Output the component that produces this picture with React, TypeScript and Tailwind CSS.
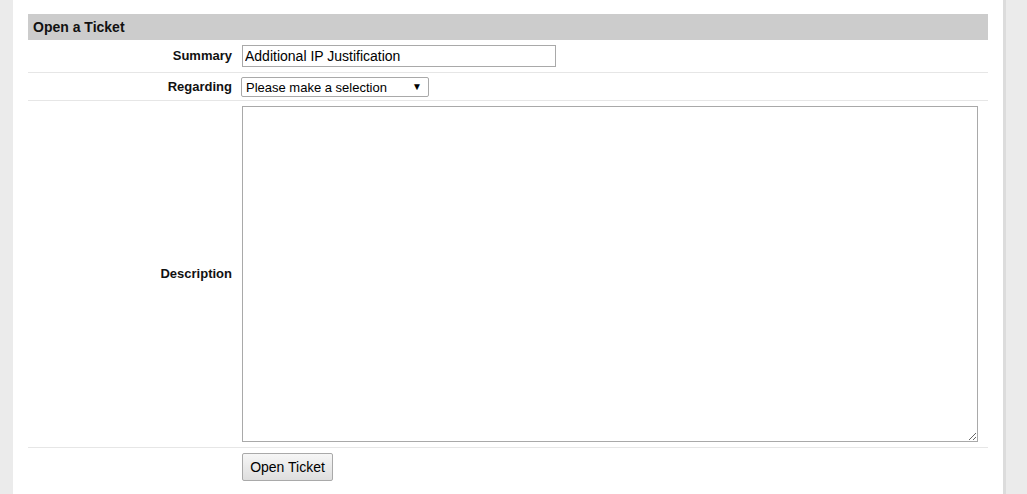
import React from "react";

export default function App() {
  const font = { fontFamily: '"Liberation Sans", Arial, sans-serif' };
  return (
    <div className="flex min-h-[494px] w-full bg-[#ebebeb]" style={font}>
      <div className="w-[13px] shrink-0 bg-[#ebebeb]" />
      <div className="flex-1 bg-white px-[15px] pt-[14px]">
        <div className="flex h-[26px] items-center bg-[#cccccc] px-[5px] text-[14px] font-bold text-[#111]">
          Open a Ticket
        </div>
        <div className="grid grid-cols-[209px_1fr] border-b border-[#e6e6e6] pt-[5px] pb-[5px]">
          <div className="flex items-center justify-end pr-[5px] text-[13px] font-bold text-[#111]">Summary</div>
          <div className="pl-[5px]">
            <input
              defaultValue="Additional IP Justification"
              className="block h-[22px] w-[314px] border border-[#a9a9a9] px-[2px] text-[14px] text-black outline-none"
              style={font}
            />
          </div>
        </div>
        <div className="grid grid-cols-[209px_1fr] border-b border-[#e6e6e6] pt-[4px] pb-[3px]">
          <div className="flex items-center justify-end pr-[5px] text-[13px] font-bold text-[#111]">Regarding</div>
          <div className="pl-[4px]">
            <div className="relative h-[20px] w-[188px]">
              <select
                className="block h-[20px] w-[188px] appearance-none rounded-[2px] border border-[#a9a9a9] bg-white pl-[4px] text-[13px] text-black outline-none"
                style={font}
              >
                <option>Please make a selection</option>
              </select>
              <span className="pointer-events-none absolute right-[7px] top-[3px] text-[10px] leading-[14px] text-black">▼</span>
            </div>
          </div>
        </div>
        <div className="grid grid-cols-[209px_1fr] border-b border-[#e6e6e6] pt-[5px] pb-[5px]">
          <div className="flex items-center justify-end pr-[5px] text-[13px] font-bold text-[#111]">Description</div>
          <div className="pl-[5px]">
            <textarea
              className="block h-[336px] w-[736px] border border-[#a9a9a9] p-[2px] text-[13px] outline-none"
              style={font}
            />
          </div>
        </div>
        <div className="grid grid-cols-[209px_1fr] pt-[5px]">
          <div />
          <div className="pl-[5px]">
            <button
              className="h-[28px] w-[91px] rounded-[2px] border border-[#a9a9a9] bg-gradient-to-b from-[#f6f6f6] to-[#dedede] text-[14px] text-black"
              style={font}
            >
              Open Ticket
            </button>
          </div>
        </div>
      </div>
      <div className="w-[24px] shrink-0 border-l-[3px] border-[#dcdcdc] bg-[#ebebeb]" />
    </div>
  );
}
